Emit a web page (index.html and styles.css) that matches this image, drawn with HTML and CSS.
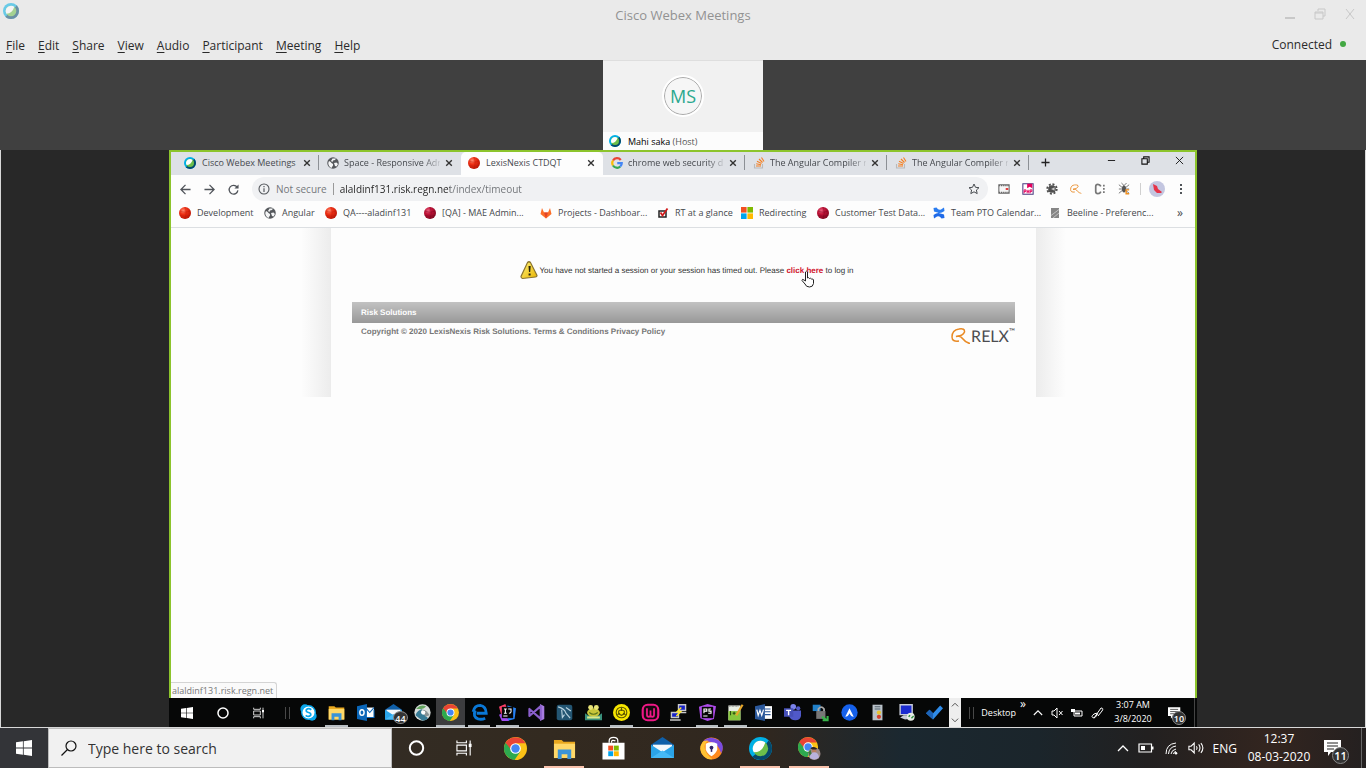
FILE: index.html
```html
<!DOCTYPE html>
<html lang="en">
<head>
<meta charset="utf-8">
<title>Cisco Webex Meetings</title>
<link rel="stylesheet" href="styles.css">
</head>
<body>
<svg class="defs" aria-hidden="true">
  <defs>
    <radialGradient id="gRed" cx="35%" cy="30%" r="75%"><stop offset="0" stop-color="#ff8a70"/><stop offset=".4" stop-color="#ee3015"/><stop offset="1" stop-color="#b81505"/></radialGradient>
    <radialGradient id="gCrim" cx="35%" cy="30%" r="75%"><stop offset="0" stop-color="#e8607c"/><stop offset=".4" stop-color="#c01238"/><stop offset="1" stop-color="#800820"/></radialGradient>
    <linearGradient id="gAvast" x1="0" y1="0" x2="1" y2="1"><stop offset="0" stop-color="#9a5cf0"/><stop offset=".45" stop-color="#6a3fd0"/><stop offset=".55" stop-color="#ffb020"/><stop offset="1" stop-color="#ff6a10"/></linearGradient>
    <linearGradient id="gWarn" x1="0" y1="0" x2="1" y2="1"><stop offset="0" stop-color="#fff27a"/><stop offset="1" stop-color="#e8b400"/></linearGradient>
  </defs>
  <symbol id="webex" viewBox="0 0 24 24"><circle cx="12" cy="12" r="12" fill="#00b0e6"/><path d="M20.500 3.500A12 12 0 0 1 24 12A12 12 0 0 1 12 24Q5 23 3.500 20.500L8 17L18 7Z" fill="#06486b"/><circle cx="12" cy="12" r="8" fill="#6cbf4b"/><path d="M12 4a8 8 0 0 0-7 12Q14 16 17 5.800A8 8 0 0 0 12 4Z" fill="#fff"/></symbol>
  <symbol id="globe" viewBox="0 0 24 24"><circle cx="12" cy="12" r="11.500" fill="#55585c"/><path d="M4 8Q7 9 9 12l3 2v3l-2 3-1 2Q3 19 2.500 12ZM11 3h7l-2 3-4 1-1 3-3-2ZM14 12l5-1 3 3-3 5-3-1-1-3Z" fill="#f4f5f6"/></symbol>
  <symbol id="red" viewBox="0 0 24 24"><circle cx="12" cy="12" r="12" fill="url(#gRed)"/><path d="M12 0q5 12 0 24M1 8q11 5 22 0M1 17q11 3 22 0" stroke="#a81408" stroke-opacity=".5" fill="none"/></symbol>
  <symbol id="crimson" viewBox="0 0 24 24"><circle cx="12" cy="12" r="12" fill="url(#gCrim)"/><path d="M12 0q5 12 0 24M1 8q11 5 22 0M1 17q11 3 22 0" stroke="#60041a" stroke-opacity=".6" fill="none"/></symbol>
  <symbol id="google" viewBox="0 0 24 24"><g fill="none" stroke-width="4.500"><path d="M19.500 6A9.500 9.500 0 0 0 4 7" stroke="#ea4335"/><path d="M4 7a9.500 9.500 0 0 0 0 10" stroke="#fbbc05"/><path d="M4 17a9.500 9.500 0 0 0 14.500 2" stroke="#34a853"/><path d="M18.500 19a9 9 0 0 0 3-7H12.500" stroke="#4285f4"/></g></symbol>
  <symbol id="so" viewBox="0 0 24 24"><path d="M3 14v8h16v-8" fill="none" stroke="#b9b9b9" stroke-width="2.200"/><path d="M6 18h10M6.500 13.500l9.500 2M8 8.500l9 4.500M12 4l7 7M17 1l5 8" stroke="#f48024" stroke-width="2.200"/></symbol>
  <symbol id="close" viewBox="0 0 10 10"><path d="M1.500 1.500l7 7M8.500 1.500l-7 7" stroke="currentColor" stroke-width="1.700"/></symbol>
  <symbol id="win" viewBox="0 0 16 16"><path d="M0 2.300L6.900 1.300V7.600H0ZM7.700 1.200L16 0v7.600H7.700ZM0 8.400h6.900v6.300L0 13.700ZM7.700 8.400H16V16L7.700 14.800Z" fill="#fff"/></symbol>
  <symbol id="ring" viewBox="0 0 16 16"><circle cx="8" cy="8" r="6.700" fill="none" stroke="#fff" stroke-width="2"/></symbol>
  <symbol id="tasks" viewBox="0 0 18 16"><g fill="none" stroke="#fff" stroke-width="1.200"><path d="M1 0v2.500h10V0M1 16v-2.500h10V16M1 5h10v6H1ZM15 0v16"/></g><path d="M13.500 3.500h3v3.500h-3Z" fill="#fff"/></symbol>
  <symbol id="chrome" viewBox="0 0 24 24"><circle cx="12" cy="12" r="12" fill="#fbc116"/><path d="M1.600 6A12 12 0 0 0 11 24l6-9-5-3Z" fill="#2da94f"/><path d="M1.600 6A12 12 0 0 1 22.400 6.500H12L8 14Z" fill="#e94435"/><circle cx="12" cy="12" r="5.600" fill="#fff"/><circle cx="12" cy="12" r="4.400" fill="#4486f4"/></symbol>
  <symbol id="folder" viewBox="0 0 24 24"><path d="M1 3h8l2 2h12v17H1Z" fill="#e9a81f"/><path d="M1 7h22v15H1Z" fill="#ffd868"/><path d="M5 13h14v10h-4v-5H9v5H5Z" fill="#3a93d8"/></symbol>
  <symbol id="mail" viewBox="0 0 24 24"><path d="M0 8L12 0l12 8v14H0Z" fill="#0f5fa8"/><path d="M2 8h20v8H2Z" fill="#f4f8fb"/><path d="M0 8l12 8 12-8v14H0Z" fill="#2ba4e8"/><path d="M0 22l12-8 12 8Z" fill="#45b9f5"/></symbol>
  <symbol id="tiles" viewBox="0 0 12 12"><path d="M0 0h5.600v5.600H0Z" fill="#f25022"/><path d="M6.400 0H12v5.600H6.400Z" fill="#7fba00"/><path d="M0 6.400h5.600V12H0Z" fill="#00a4ef"/><path d="M6.400 6.400H12V12H6.400Z" fill="#ffb900"/></symbol>
  <symbol id="relx" viewBox="0 0 20 16"><path d="M8 13Q1 14 1 9Q1 2 8 1Q14 0 13.500 4Q12 8 5 8.500Q9 7 12 11Q15 15 19 15.500" fill="none" stroke="#e98a25" stroke-width="1.500"/></symbol>
  <symbol id="up" viewBox="0 0 12 8"><path d="M1 7l5-5 5 5" fill="none" stroke="currentColor" stroke-width="1.300"/></symbol>
  <symbol id="note" viewBox="0 0 18 16"><path d="M0 0h17v12H7l-3 4v-4H0Z" fill="#fff"/><path d="M3 3h11M3 6h11M3 9h7" stroke="#222" stroke-width="1"/></symbol>
</svg>

<header class="app-head">
  <div class="title-row">
    <svg class="app-logo"><use href="#webex"/></svg>
    <h1>Cisco Webex Meetings</h1>
    <div class="win-controls">
      <button aria-label="Minimize"><svg viewBox="0 0 12 12"><path d="M1 10h10" stroke="currentColor" stroke-width="2"/></svg></button>
      <button aria-label="Restore"><svg viewBox="0 0 12 12"><path d="M1 4h8v7H1ZM1 5h8M4 3V1h7v7h-2" fill="none" stroke="currentColor"/></svg></button>
      <button aria-label="Close"><svg viewBox="0 0 12 12"><path d="M2 1l8 10M10 1L2 11" stroke="currentColor"/></svg></button>
    </div>
  </div>
  <nav class="menu-row">
    <button><u>F</u>ile</button><button><u>E</u>dit</button><button><u>S</u>hare</button><button><u>V</u>iew</button><button><u>A</u>udio</button><button><u>P</u>articipant</button><button><u>M</u>eeting</button><button><u>H</u>elp</button>
    <span class="status">Connected<i class="dot"></i></span>
  </nav>
</header>

<section class="strip">
  <div class="person">
    <div class="person-video"><span class="avatar">MS</span></div>
    <div class="person-name"><svg><use href="#webex"/></svg><span><b>Mahi saka</b> (Host)</span></div>
  </div>
</section>

<main class="stage">
  <div class="shared">
    <div class="browser">
      <div class="tabs">
        <div class="tab ruled"><svg><use href="#webex"/></svg><span>Cisco Webex Meetings</span><button aria-label="Close tab"><svg><use href="#close"/></svg></button></div>
        <div class="tab faded"><svg><use href="#globe"/></svg><span>Space - Responsive Adr</span><button aria-label="Close tab"><svg><use href="#close"/></svg></button></div>
        <div class="tab active"><svg><use href="#red"/></svg><span>LexisNexis CTDQT</span><button aria-label="Close tab"><svg><use href="#close"/></svg></button></div>
        <div class="tab ruled faded"><svg><use href="#google"/></svg><span>chrome web security di</span><button aria-label="Close tab"><svg><use href="#close"/></svg></button></div>
        <div class="tab ruled faded"><svg><use href="#so"/></svg><span>The Angular Compiler r</span><button aria-label="Close tab"><svg><use href="#close"/></svg></button></div>
        <div class="tab ruled faded"><svg><use href="#so"/></svg><span>The Angular Compiler r</span><button aria-label="Close tab"><svg><use href="#close"/></svg></button></div>
        <button class="new-tab" aria-label="New tab"><svg viewBox="0 0 10 10"><path d="M5 0.500v9M.5 5h9" stroke="currentColor" stroke-width="1.400"/></svg></button>
        <div class="tab-controls">
          <button aria-label="Minimize window"><svg viewBox="0 0 10 10"><path d="M1 5h8" stroke="currentColor"/></svg></button>
          <button aria-label="Restore window"><svg viewBox="0 0 10 10"><path d="M1 3h6v6H1ZM3 3V1h6v6H7" fill="none" stroke="currentColor" stroke-width="1.200"/></svg></button>
          <button aria-label="Close window"><svg viewBox="0 0 10 10"><path d="M1 1l8 8M9 1L1 9" stroke="currentColor"/></svg></button>
        </div>
      </div>

      <div class="toolbar">
        <button class="nav" aria-label="Back"><svg viewBox="0 0 12 12"><path d="M11.500 6H1.500M6 1L1 6l5 5" fill="none" stroke="currentColor" stroke-width="1.400"/></svg></button>
        <button class="nav" aria-label="Forward"><svg viewBox="0 0 12 12"><path d="M.5 6h10M6 1l5 5-5 5" fill="none" stroke="currentColor" stroke-width="1.400"/></svg></button>
        <button class="nav" aria-label="Reload"><svg viewBox="0 0 12 12"><path d="M10 3.500A4.800 4.800 0 1 0 10.800 7" fill="none" stroke="currentColor" stroke-width="1.400"/><path d="M11.500.5V5H7Z" fill="currentColor"/></svg></button>
        <div class="address">
          <svg viewBox="0 0 12 12"><circle cx="6" cy="6" r="5" fill="none" stroke="#55595e" stroke-width="1.100"/><path d="M6 5.200V9M6 3v1.200" stroke="#55595e" stroke-width="1.200"/></svg>
          <span class="insecure">Not secure</span>
          <input class="url" type="text" aria-label="Address" value="alaldinf131.risk.regn.net/index/timeout">
          <button class="star" aria-label="Bookmark this page"><svg viewBox="0 0 12 12"><path d="M6 1l1.500 3.300 3.500.4L8.400 7l.8 3.600L6 8.800l-3.200 1.800L3.600 7 1 4.700l3.500-.4Z" fill="none" stroke="#484c50"/></svg></button>
        </div>
        <div class="exts">
          <button aria-label="Screen recorder"><svg viewBox="0 0 14 14"><path d="M1 2h12v10H1Z" fill="#f6f6f6" stroke="#666" stroke-width="1.200"/><path d="M1 3h12M1 11h12" stroke="#666" stroke-width="1.600" stroke-dasharray="1.500 1"/><path d="M9 7h3" stroke="#d22" stroke-width="2"/></svg></button>
          <button aria-label="PHP console"><svg viewBox="0 0 14 14"><path d="M1 1h12v12H1Z" fill="#fff" stroke="#4a3a80" stroke-width="1.200"/><path d="M6 1h6v5L9 4.500 6 6Z" fill="#e6005c"/><path d="M2.500 12V8h2v2h-2M6 8v4M6 10h2M8 8v4M9.500 12V8h2v2h-2" fill="none" stroke="#e6005c" stroke-width="1.100"/></svg></button>
          <button aria-label="Settings extension"><svg viewBox="0 0 14 14"><circle cx="7" cy="7" r="4.500" fill="#505050"/><circle cx="7" cy="7" r="5.500" fill="none" stroke="#505050" stroke-width="2.200" stroke-dasharray="2.300 2"/><path d="M6 7l4-2v4Z" fill="#ccc"/></svg></button>
          <button aria-label="RELX extension"><svg viewBox="0 0 20 16"><use href="#relx"/></svg></button>
          <button aria-label="Color extension"><svg viewBox="0 0 14 14"><path d="M8 4Q7 1.500 4.500 1.500T2 4v6q0 2.500 2.500 2.500T8 10" fill="none" stroke="#777" stroke-width="2"/><path d="M11.500 2v10" stroke="#777" stroke-width="2" stroke-dasharray="2 1.800"/></svg></button>
          <button aria-label="Bug extension"><svg viewBox="0 0 14 14"><ellipse cx="7" cy="7" rx="2.300" ry="4" fill="#555"/><path d="M1 2l12 10M13 2L1 12M1 7h12M4 0l3 3 3-3" fill="none" stroke="#555" stroke-width=".9"/><path d="M13 8H9.500v4.500H13" fill="none" stroke="#f09020" stroke-width="1.700"/></svg></button>
        </div>
        <button class="profile" aria-label="Profile"><svg viewBox="0 0 16 16"><circle cx="8" cy="8" r="8" fill="#c3c6e0"/><path d="M4 3l4 2 1 3 4 3-1 1H8L5 9Z" fill="#e63348"/></svg></button>
        <button class="more" aria-label="More"><svg viewBox="0 0 4 12"><path d="M1 1h2v2H1ZM1 5h2v2H1ZM1 9h2v2H1Z" fill="#505458"/></svg></button>
      </div>

      <nav class="bookmarks">
        <a href="#"><svg><use href="#red"/></svg>Development</a>
        <a href="#"><svg><use href="#globe"/></svg>Angular</a>
        <a href="#"><svg><use href="#red"/></svg>QA----aladinf131</a>
        <a href="#"><svg><use href="#crimson"/></svg>[QA] - MAE Admin...</a>
        <a href="#"><svg viewBox="0 0 24 24"><path d="M12 23L1 14 4 2l4 9h8l4-9 3 12Z" fill="#fc6d26"/><path d="M12 23L8 11h8Z" fill="#e24329"/></svg>Projects - Dashboar...</a>
        <a href="#"><svg viewBox="0 0 12 12"><path d="M2 4h7v6H2Z" fill="none" stroke="#222" stroke-width="1.500"/><path d="M3.500 5.500l2 3L10.500 1.500" fill="none" stroke="#d01818" stroke-width="1.800"/></svg>RT at a glance</a>
        <a href="#"><svg><use href="#tiles"/></svg>Redirecting</a>
        <a href="#"><svg><use href="#crimson"/></svg>Customer Test Data...</a>
        <a href="#"><svg viewBox="0 0 24 24"><path d="M1 2l6-1q4 6 9 4l6-4 1 7q-8 6-14 3L2 9Z" fill="#2a7cf0"/><path d="M23 22l-6 1q-4-6-9-4l-6 4-1-7q8-6 14-3l7 2Z" fill="#1f6ae8"/></svg>Team PTO Calendar...</a>
        <a href="#"><svg viewBox="0 0 12 12"><path d="M2 1h8v10H2Z" fill="#868686"/><path d="M2 8.500l8-6M4 11l6-5" stroke="#ddd" stroke-width=".7"/></svg>Beeline - Preferenc...</a>
        <button aria-label="More bookmarks">»</button>
      </nav>

      <div class="viewport">
        <div class="sheet">
          <p class="message">
            <svg viewBox="0 0 18 18"><path d="M7.500 1.500Q9 0 10.500 1.500L17 14.500Q17 16 15.500 16L2.500 17.500Q1 17 1 15.500Z" fill="url(#gWarn)" stroke="#8a7430" stroke-width="1.200"/><path d="M8.500 5h2.200l-.5 6H9ZM8.600 12.500h2v2h-2Z" fill="#26220c"/></svg>
            <span>You have not started a session or your session has timed out. Please <a href="#" class="here">click here<svg class="hand" viewBox="0 0 14 18"><path d="M4.500 11V2Q5.500 .3 6.500 2v6q1-1 2 .5q1-.8 2 .5q1.500-.5 2 1v3.500q-.5 3.500-4 3.500t-4.500-3L1 10.500q0-2 2-.5Z" fill="#fff" stroke="#222"/></svg></a> to log in</span>
          </p>
          <div class="bar">Risk Solutions</div>
          <footer class="foot">
            <span>Copyright © 2020 LexisNexis Risk Solutions. <a href="#">Terms &amp; Conditions</a> <a href="#">Privacy Policy</a></span>
            <span class="relx"><svg><use href="#relx"/></svg>RELX<sup>™</sup></span>
          </footer>
        </div>
        <div class="hint">alaldinf131.risk.regn.net</div>
      </div>
    </div>

    <div class="remote-bar">
      <button class="sys" aria-label="Start"><svg><use href="#win"/></svg></button>
      <button class="sys" aria-label="Cortana"><svg><use href="#ring"/></svg></button>
      <button class="sys" aria-label="Task view"><svg><use href="#tasks"/></svg></button>
      <i class="grip"></i>
      <div class="remote-apps">
        <button aria-label="Skype"><svg viewBox="0 0 24 24"><circle cx="7" cy="7" r="6.500" fill="#0aa7ec"/><circle cx="17" cy="17" r="6.500" fill="#0aa7ec"/><circle cx="12" cy="12" r="9.500" fill="#fff" stroke="#0aa7ec" stroke-width="2"/><path d="M16 8Q12 5 9 8q-1 3 3 4t3 4q-3 3-7 0" fill="none" stroke="#0aa7ec" stroke-width="2.500"/></svg></button>
        <button class="open" aria-label="File Explorer"><svg><use href="#folder"/></svg></button>
        <button aria-label="Outlook"><svg viewBox="0 0 24 24"><path d="M12 5h12v14H12Z" fill="#fff"/><path d="M12 5l6 7 6-7M12 19h12V8" fill="none" stroke="#0a66b8" stroke-width="1.500"/><path d="M0 3l14-3v24L0 21Z" fill="#0a66b8"/><ellipse cx="7" cy="12" rx="3" ry="4" fill="none" stroke="#fff" stroke-width="2"/></svg></button>
        <button aria-label="Mail, 44 unread"><svg><use href="#mail"/></svg><b class="badge">44</b></button>
        <button aria-label="Network client"><svg viewBox="0 0 24 24"><circle cx="12" cy="12" r="11.500" fill="#d9dedc"/><path d="M2 16Q5 8 12 7l-2 4 10 9q-4 4-9 3Z" fill="#387b96"/><path d="M3 7q6-7 14-4-3 5-14 4Z" fill="#63a45e"/><path d="M12 8q6 0 10 8l-6 2Z" fill="#8a9496"/><circle cx="13" cy="12" r="3" fill="#fff"/></svg></button>
        <button class="open lit" aria-label="Chrome"><svg><use href="#chrome"/></svg></button>
        <button class="open" aria-label="Edge"><svg viewBox="0 0 24 24"><path d="M3 11Q5 2 13 2q8 1 8.500 11H8" fill="none" stroke="#0a78d7" stroke-width="4"/><path d="M6 9q-4 9 4 12 5 1.500 10-1" fill="none" stroke="#0a78d7" stroke-width="4"/></svg></button>
        <button class="open" aria-label="IntelliJ IDEA"><svg viewBox="0 0 24 24"><path d="M0 4l9-4 4 12-8 10Z" fill="#fc3f68"/><path d="M12 2l12 4-2 15-10 3Z" fill="#2682f5"/><path d="M0 15l8-3 6 12H4Z" fill="#a04df0"/><path d="M4 4h16v16H4Z" fill="#060606"/><path d="M7 7h4M9 7v6M7 13h4M13 7h4v4q0 2-3 2M6 17h6" fill="none" stroke="#fff" stroke-width="1.500"/></svg></button>
        <button aria-label="Visual Studio"><svg viewBox="0 0 24 24"><path d="M17 0l6 3v18l-6 3Z" fill="#a77be0"/><path d="M2 7v10L18 3v18L2 7Z" fill="none" stroke="#8a5fcb" stroke-width="3" stroke-linejoin="round"/></svg></button>
        <button aria-label="MySQL Workbench"><svg viewBox="0 0 24 24"><rect x="1" y="1" width="22" height="22" rx="3" fill="#235572"/><path d="M3 4q9 2 11 9l6 7M8 8l1 11 3-4M14 5l7 5" fill="none" stroke="#b9d2df" stroke-width="1.600"/></svg></button>
        <button aria-label="Toad"><svg viewBox="0 0 24 24"><path d="M0 13l4 3h16l4-3v10H0Z" fill="#39907c"/><ellipse cx="12" cy="12" rx="9" ry="6" fill="#c9c63a"/><circle cx="8" cy="5" r="3.500" fill="#e8e478"/><circle cx="16" cy="5" r="3.500" fill="#e8e478"/><path d="M6 12q6 5 12 0" fill="none" stroke="#55701c" stroke-width="1.500"/><path d="M3 19h18" stroke="#dce989" stroke-width="3"/></svg></button>
        <button class="open" aria-label="Network tool"><svg viewBox="0 0 24 24"><circle cx="12" cy="12" r="12" fill="#f7e600"/><circle cx="12" cy="12" r="7.500" fill="none" stroke="#5a5200" stroke-width="1.500"/><path d="M12 5v5M6 15l4-2M18 15l-4-2M12 8l4 2v4l-4 2-4-2v-4Z" fill="none" stroke="#5a5200" stroke-width="1.500"/></svg></button>
        <button aria-label="WampServer"><svg viewBox="0 0 24 24"><rect x="1" y="1" width="22" height="22" rx="7" fill="#160a10" stroke="#ef1886" stroke-width="3"/><path d="M7 6v9q0 3 2.500 3T12 15V9v6q0 3 2.500 3t2.500-3V6" fill="none" stroke="#ef1886" stroke-width="2.500"/></svg></button>
        <button aria-label="PuTTY"><svg viewBox="0 0 24 24"><path d="M12 1h10v8H12ZM2 12h10v7H2Z" fill="#1722c8" stroke="#c9c9c9" stroke-width="2"/><path d="M11 12h12M0 22.500h15" stroke="#c9c9c9" stroke-width="2"/><path d="M16 5l-6 6h5l-6 6" fill="none" stroke="#ffe92c" stroke-width="2"/></svg></button>
        <button class="open" aria-label="PhpStorm"><svg viewBox="0 0 24 24"><path d="M0 4l12-4 12 3-3 18-9 3-10-4Z" fill="#ae4bea"/><path d="M4 4h16v16H4Z" fill="#050505"/><path d="M7 13V7h4v3H7M17 7h-3v3h3v3h-4M6 17h6" fill="none" stroke="#fff" stroke-width="1.600"/></svg></button>
        <button class="open" aria-label="Notepad++"><svg viewBox="0 0 24 24"><path d="M2 2h17v21H2Z" fill="#e9eee4"/><path d="M2 10h17v13H2Z" fill="#86c63c"/><path d="M5 10v6M8 13h4M10 11v4" stroke="#2b4a12" stroke-width="1.500"/><path d="M13 16L22 1" stroke="#e7a72a" stroke-width="3"/><path d="M3 3h13" stroke="#777" stroke-width="2" stroke-dasharray="1 1"/></svg></button>
        <button aria-label="Word"><svg viewBox="0 0 24 24"><path d="M12 3h12v18H12Z" fill="#fff"/><path d="M14 7h8M14 11h8M14 15h8" stroke="#2a579a" stroke-width="1.500"/><path d="M0 3l14-3v24L0 21Z" fill="#2a579a"/><path d="M2.500 8l2 8L7 9l2.500 7L12 8" fill="none" stroke="#fff" stroke-width="1.700"/></svg></button>
        <button aria-label="Teams"><svg viewBox="0 0 24 24"><circle cx="13" cy="4" r="4" fill="#7b83eb"/><circle cx="20" cy="6" r="3" fill="#5059c9"/><path d="M7 9h17v8q-1 6-8 6t-9-6Z" fill="#5059c9"/><path d="M0 6h13v12H0Z" fill="#4650b8"/><path d="M3 9h7M6.500 9v7" stroke="#fff" stroke-width="2"/></svg></button>
        <button aria-label="Secure transfer"><svg viewBox="0 0 24 24"><path d="M1 1h11v9H1Z" fill="#2180c8"/><path d="M9 11V7q4-5 8 0v4" fill="none" stroke="#aaa" stroke-width="2.500"/><path d="M6 10h13v11H6Z" fill="#777"/><path d="M14 18l7 5M22 17v6h-7" fill="none" stroke="#38b44a" stroke-width="3"/></svg></button>
        <button aria-label="Azure tool"><svg viewBox="0 0 24 24"><circle cx="12" cy="12" r="11.500" fill="#1560ea"/><path d="M6 18l6-12 6 12q-4 0-6-5-2 5-6 5Z" fill="#fff"/></svg></button>
        <button aria-label="Server"><svg viewBox="0 0 24 24"><path d="M5 1h14v22H5Z" fill="#b9c2c9"/><path d="M8 4h8M8 7h8" stroke="#54626c" stroke-width="1.500"/><circle cx="14" cy="12" r="3" fill="#e9c531"/><circle cx="14" cy="18" r="3" fill="#d4402c"/></svg></button>
        <button aria-label="Remote desktop"><svg viewBox="0 0 24 24"><path d="M3 1h17v14H3Z" fill="#1b2bd0" stroke="#c8ccd8" stroke-width="2"/><path d="M3 19l5-3h12l2 4-12 2Z" fill="#c8ccd8"/><circle cx="18" cy="18" r="5.500" fill="#e7ece5"/><path d="M15 18l2-2M19 20l3-3" stroke="#2d8e3d" stroke-width="2"/></svg></button>
        <button aria-label="To Do"><svg viewBox="0 0 24 24"><path d="M0 13l5-5 5 5L20 2l4 4-14 16Z" fill="#2f8be8"/><path d="M0 13l5-5 5 5 0 9Z" fill="#1c63b8"/></svg></button>
      </div>
      <div class="scroller"><button aria-label="Scroll up"><svg><use href="#up"/></svg></button><button aria-label="Scroll down"><svg class="flip"><use href="#up"/></svg></button></div>
      <i class="grip"></i>
      <span class="desk">Desktop</span><span class="chev">»</span>
      <div class="remote-tray">
        <svg><use href="#up"/></svg>
        <svg viewBox="0 0 12 12"><path d="M1 4h2l3-3v10L3 8H1ZM8 4l3.500 4M11.500 4L8 8" fill="none" stroke="#fff"/></svg>
        <svg viewBox="0 0 12 12"><path d="M3 4h8v5H3Z" fill="none" stroke="#fff"/><path d="M4 5.500h5v2H4ZM0 2h4v3H0Z" fill="#fff"/></svg>
        <svg viewBox="0 0 12 12"><path d="M3 11q-4-1 0-4Q8 5 6 8T3 11L10 1q3 0 1 3L7 9" fill="none" stroke="#fff"/></svg>
      </div>
      <div class="remote-clock"><span>3:07 AM</span><span>3/8/2020</span></div>
      <button class="remote-note" aria-label="Notifications"><svg><use href="#note"/></svg><b class="badge">10</b></button>
    </div>
  </div>
</main>

<footer class="taskbar">
  <button class="start" aria-label="Start"><svg><use href="#win"/></svg></button>
  <label class="search"><svg viewBox="0 0 16 16"><circle cx="10" cy="6" r="5" fill="none" stroke="#111" stroke-width="1.200"/><path d="M6.500 9.500L.5 15.500" stroke="#111" stroke-width="1.200"/></svg><input type="text" placeholder="Type here to search" aria-label="Type here to search"></label>
  <button class="sys" aria-label="Cortana"><svg><use href="#ring"/></svg></button>
  <button class="sys" aria-label="Task view"><svg><use href="#tasks"/></svg></button>
  <div class="apps">
    <button aria-label="Chrome"><svg><use href="#chrome"/></svg></button>
    <button class="open" aria-label="File Explorer"><svg><use href="#folder"/></svg></button>
    <button aria-label="Microsoft Store"><svg viewBox="0 0 24 24"><path d="M7.500 6V4q0-3.500 4.500-3.500t4.500 3.500v2M10 6V5q0-2.500 4-1" fill="none" stroke="#fff" stroke-width="1.300"/><path d="M.5 6h23v17.500H.5Z" fill="#fff"/><path d="M6.500 9H11.600v5.100H6.500Z" fill="#f25022"/><path d="M12.400 9h5.100v5.100H12.400Z" fill="#7fba00"/><path d="M6.500 14.900H11.600V20H6.500Z" fill="#00a4ef"/><path d="M12.400 14.900h5.100V20H12.400Z" fill="#ffb900"/></svg></button>
    <button aria-label="Mail"><svg><use href="#mail"/></svg></button>
    <button aria-label="Avast Secure Browser"><svg viewBox="0 0 24 24"><circle cx="12" cy="12" r="11.500" fill="#ff8a1c"/><path d="M3 5Q9-2 18 2.500T22 17Q20 8 12 5.500T3 5Z" fill="#7a4be0"/><path d="M3 5Q-3 13 4 20q4 4 9 3Q6 18 5 12T9 4Q6 3 3 5Z" fill="#ffc233"/><path d="M6 7q6-3 12 0v6q-1 4-6 7-5-3-6-7Z" fill="#fff"/><circle cx="12" cy="11" r="2" fill="#35266a"/><path d="M12 11v4.500" stroke="#35266a" stroke-width="1.600"/></svg></button>
    <button class="open" aria-label="Webex"><svg><use href="#webex"/></svg></button>
    <button class="open" aria-label="Chrome, profile window"><svg viewBox="0 0 24 24"><use href="#chrome" width="21" height="21"/><circle cx="17" cy="17.500" r="6.500" fill="#9c8a88"/><circle cx="17" cy="14.500" r="2.300" fill="#b97e5f"/><path d="M12 21q1-5 5-5t5 5q-5 5-10 0Z" fill="#b9b2dc"/><path d="M13 12q2-3 7 0l-1 1h-4Z" fill="#2c2320"/><path d="M11 16l2-3 1 4-2 3Z" fill="#3d7a39"/></svg></button>
  </div>
  <div class="tray">
    <svg><use href="#up"/></svg>
    <svg class="wide" viewBox="0 0 16 12"><path d="M1 2h12.500v8H1Z" fill="none" stroke="#fff" stroke-width="1.200"/><path d="M3 4h4v4H3ZM14 4.500h1.500v3H14Z" fill="#fff"/></svg>
    <svg class="wide" viewBox="0 0 14 14"><path d="M2 13Q2 3 12 2M4.500 13Q5 6 12 5M7 13q.5-4 5-5M9.500 13q0-2 2.500-2.500" fill="none" stroke="#fff"/><circle cx="12" cy="12.300" r="1.300" fill="#fff"/></svg>
    <svg class="wide" viewBox="0 0 18 14"><path d="M1 5h2.500L7 1.500v11L3.500 9H1ZM9.500 5q1.500 2 0 4M12 3q3 4 0 8M14.500 1.500q4.500 5.500 0 11" fill="none" stroke="#fff" stroke-width="1.200"/></svg>
    <span>ENG</span>
  </div>
  <div class="clock"><span>12:37</span><span>08-03-2020</span></div>
  <button class="notes" aria-label="Notifications"><svg><use href="#note"/></svg><b class="badge">11</b></button>
</footer>
</body>
</html>
```
FILE: styles.css
```css
* { box-sizing: border-box; }
body { margin: 0; height: 100vh; display: flex; flex-direction: column; overflow: hidden; background: #282828; font-family: "Open Sans", "Noto Sans", sans-serif; font-size: 12px; color: #222; }
button { margin: 0; padding: 0; border: 0; background: none; font: inherit; color: inherit; display: flex; align-items: center; justify-content: center; }
button:focus, input:focus { outline: none; }
a { color: inherit; text-decoration: none; }
svg { display: block; flex: none; overflow: visible; }
.defs { position: absolute; width: 0; height: 0; }

/* Meeting window header */
.app-head { background: #eaeaea; }
.title-row { display: grid; grid-template-columns: 1fr auto 1fr; height: 30px; align-items: center; }
.app-logo { width: 16px; height: 16px; margin-left: 3px; margin-bottom: 8px; opacity: .55; }
.title-row h1 { margin: 0; font-size: 13px; font-weight: 400; color: #929292; }
.win-controls { display: flex; gap: 18px; justify-content: flex-end; padding-right: 10px; padding-bottom: 3px; color: #c8c8c8; }
.win-controls svg { width: 12px; height: 12px; }
.menu-row { display: flex; align-items: center; gap: 13px; height: 30px; padding: 0 20px 0 6px; font-size: 12px; color: #2a2a2a; }
.menu-row u { text-underline-offset: 2px; }
.status { margin-left: auto; display: flex; align-items: center; gap: 8px; padding-bottom: 2px; }
.dot { width: 6px; height: 6px; border-radius: 50%; background: #43a843; }

/* Participant strip */
.strip { height: 90px; background: #404040; display: flex; justify-content: center; }
.person { width: 160px; display: flex; flex-direction: column; background: #f1f1f1; border-top: 1px solid #dedede; }
.person-video { flex: 1; display: grid; place-items: center; padding-bottom: 2px; }
.avatar { width: 38px; height: 38px; border: 1px solid #aaa; outline: 2px solid #fff; border-radius: 50%; display: grid; place-items: center; background: #f6f6f6; font-size: 18px; color: #2aa88e; }
.person-name { display: flex; align-items: center; gap: 7px; height: 18px; padding-left: 6px; background: #fcfcfc; font-size: 9px; color: #555; }
.person-name b { font-weight: 400; color: #000; }
.person-name svg { width: 12px; height: 12px; }

/* Shared screen */
.stage { flex: 1; min-height: 0; display: flex; padding: 0 168px; background: #282828; border: 1px solid #d8d8d8; border-top: 0; }
.shared { flex: 1; min-width: 0; display: flex; flex-direction: column; font-size: 9px; }
.browser { flex: 1; min-height: 0; display: flex; flex-direction: column; border: 2px solid #8cc42c; border-bottom: 0; background: #fdfdfd; }
.tabs { display: flex; height: 23px; padding-left: 6px; background: #dee1e6; color: #46494e; }
.tab { width: 142px; display: flex; align-items: center; gap: 6px; padding: 0 8px 2px 7px; }
.tab > svg { width: 12px; height: 12px; }
.tab span { flex: 1; min-width: 0; white-space: nowrap; }
.tab.faded { gap: 5px; padding-left: 8px; }
.tab.faded span { -webkit-mask-image: linear-gradient(90deg, #000 82%, rgba(0, 0, 0, .15)); mask-image: linear-gradient(90deg, #000 82%, rgba(0, 0, 0, .15)); }
.tab button svg { width: 8px; height: 8px; color: #333; }
.tab.ruled { background: linear-gradient(#8c9095, #8c9095) right 3px / 1px 15px no-repeat; }
.tab.active { background: #fdfdfd; border-radius: 5px 5px 0 0; }
.new-tab { width: 32px; padding-bottom: 2px; }
.new-tab svg { width: 9px; height: 9px; color: #222; }
.tab-controls { margin-left: auto; display: flex; gap: 25px; padding: 0 11px 6px 0; color: #111; }
.tab-controls svg { width: 9px; height: 9px; }
.toolbar { display: flex; align-items: center; height: 28px; padding: 0 12px 0 2px; }
.nav { width: 24px; height: 24px; color: #50545a; }
.nav svg { width: 11px; height: 11px; }
.address { flex: 1; min-width: 0; display: flex; align-items: center; height: 24px; margin-left: 7px; padding: 0 8px 0 6px; border-radius: 12px; background: #f0f1f3; font-size: 10px; }
.address svg { width: 12px; height: 12px; }
.insecure { margin-left: 6px; padding-right: 6px; line-height: 12px; color: #75787c; border-right: 1px solid #999; }
.url { flex: 1; min-width: 0; border: 0; padding: 0 0 0 6px; font: inherit; color: transparent; background: linear-gradient(90deg, #222 116px, #6e7175 116px); -webkit-background-clip: text; background-clip: text; }
.exts { display: flex; gap: 12px; margin-left: 10px; }
.exts svg { width: 12px; height: 12px; }
.profile { margin-left: 10px; padding-left: 8px; border-left: 1px solid #d0d0d0; height: 12px; }
.profile svg { width: 16px; height: 16px; }
.more { margin-left: 14px; }
.more svg { width: 4px; height: 12px; }
.bookmarks { display: grid; grid-template-columns: 85px 61px 99px 116px 117px 84px 76px 116px 116px 1fr auto; align-items: center; height: 25px; padding: 0 12px 5px 8px; border-bottom: 1px solid #dcdfe2; color: #45484c; white-space: nowrap; }
.bookmarks a { display: flex; align-items: center; gap: 6px; }
.bookmarks svg { width: 12px; height: 12px; }
.bookmarks button { font-size: 12px; }

/* Web page */
.viewport { flex: 1; position: relative; display: flex; justify-content: center; align-items: flex-start; padding: 0 158px 0 159px; background: #fdfdfd; font-family: "Liberation Sans", Arial, sans-serif; text-rendering: geometricPrecision; }
.sheet { flex: 1; height: 169px; padding: 33px 21px 0; position: relative; border: solid #e4e5e8; border-width: 0 1px; }
.sheet::before, .sheet::after { content: ""; position: absolute; top: 0; bottom: 0; width: 30px; }
.sheet::before { right: 100%; background: linear-gradient(270deg, #ececec, #fdfdfd); }
.sheet::after { left: 100%; background: linear-gradient(90deg, #ececec, #fdfdfd); }
.message { margin: 0 0 23px; display: flex; align-items: center; justify-content: center; gap: 1px; padding-left: 7px; font-size: 8px; color: #333; }
.message > svg { width: 18px; height: 18px; }
.here { position: relative; font-weight: 700; color: #d0142c; }
.hand { position: absolute; left: 15px; top: 4px; width: 14px; height: 18px; }
.bar { height: 21px; padding-left: 9px; line-height: 21px; background: linear-gradient(#c2c2c2, #989898); color: #fff; font-size: 8px; font-weight: 700; }
.foot { display: flex; justify-content: space-between; padding: 4px 0 0 9px; font-size: 8px; font-weight: 700; color: #777; }
.relx { display: flex; align-items: center; height: 18px; font-family: Lato, sans-serif; font-size: 16px; font-weight: 400; color: #4c4c50; }
.relx svg { width: 20px; height: 16px; }
.relx sup { font-size: 8px; line-height: 8px; align-self: flex-start; }
.hint { position: absolute; left: 0; bottom: 0; height: 16px; padding: 0 3px 0 1px; border: 1px solid #d4d4d4; border-width: 1px 1px 0 0; border-radius: 0 3px 0 0; background: #fafafa; font: 9px/15px "Open Sans", sans-serif; text-rendering: auto; color: #777; }

/* Remote taskbar */
.remote-bar { display: flex; height: 29px; background: #060707; color: #fff; }
.remote-bar .sys { width: 36px; }
.remote-bar .sys svg { width: 12px; height: 12px; }
.grip { width: 5px; height: 12px; margin: auto 4px auto 8px; border: solid #484848; border-width: 0 1px; flex: none; }
.remote-apps { flex: 1; display: flex; min-width: 0; }
.remote-apps button { flex: 1; position: relative; }
.remote-apps svg { width: 17px; height: 17px; }
.remote-apps .open::after { content: ""; position: absolute; left: 3px; right: 3px; bottom: 0; height: 2px; background: #b7bdc2; }
.remote-apps .lit { background: #3c3c3e; }
.remote-apps .lit::after { left: 0; right: 0; }
.badge { position: absolute; display: grid; place-items: center; border: 1px solid #888; border-radius: 50%; background: #333; color: #fff; font-weight: 600; }
.remote-apps .badge { right: 0; bottom: 3px; width: 15px; height: 13px; font-size: 9px; }
.scroller { width: 12px; display: flex; flex-direction: column; justify-content: space-between; padding: 4px 2px; background: #eee; color: #333; }
.scroller svg { width: 8px; height: 5px; }
.flip { transform: rotate(180deg); }
.desk { align-self: center; }
.scroller + .grip { margin-right: 7px; }
.chev { margin-left: 4px; font-size: 12px; line-height: 12px; }
.remote-tray { display: flex; align-items: center; gap: 8px; margin-left: 7px; }
.remote-tray svg { width: 12px; height: 12px; }
.remote-tray svg:first-child { width: 10px; height: 7px; }
.remote-clock { width: 50px; margin-left: 5px; display: flex; flex-direction: column; align-items: center; line-height: 14px; font-size: 9px; }
.remote-note { width: 37px; position: relative; border-right: 1px solid #444; margin-right: 2px; padding-right: 4px; }
.remote-note svg { width: 13px; height: 12px; }
.remote-note .badge { left: 14px; bottom: 2px; width: 14px; height: 14px; font-size: 9px; }

/* Local taskbar */
.taskbar { display: flex; height: 40px; color: #fff; background: linear-gradient(90deg, #33302b 0, #332a20 40%, #30271f 56%, #1b2830 66%, #1b252b 76%, #222020 84%, #33251f 93%, #242020 100%); }
.start { width: 48px; background: #333438; }
.start svg { width: 16px; height: 16px; }
.search { width: 344px; display: flex; align-items: center; gap: 11px; padding-left: 12px; background: #f1f1f1; border: 1px solid #bcbcbc; }
.search svg { width: 16px; height: 16px; }
.search input { flex: 1; min-width: 0; border: 0; padding: 0; background: none; font: 14px "Open Sans", sans-serif; }
.search input::placeholder { color: #333; opacity: 1; }
.taskbar .sys { width: 48px; }
.taskbar .sys svg { width: 17px; height: 16px; }
.apps { display: flex; margin-left: 3px; }
.apps button { width: 49px; position: relative; }
.apps svg { width: 23px; height: 23px; }
.apps .open::after { content: ""; position: absolute; left: 4px; right: 5px; bottom: 0; height: 2px; background: #f9c2ac; }
.tray { margin-left: auto; display: flex; align-items: center; gap: 9px; }
.tray svg { width: 12px; height: 8px; }
.tray .wide { width: 16px; height: 14px; }
.clock { width: 84px; display: flex; flex-direction: column; align-items: center; justify-content: center; line-height: 18px; }
.notes { width: 41px; position: relative; border-right: 1px solid #666; margin-right: 4px; padding-right: 16px; }
.notes svg { width: 18px; height: 16px; }
.notes .badge { left: 11px; bottom: 4px; width: 17px; height: 17px; font-size: 11px; }
```
